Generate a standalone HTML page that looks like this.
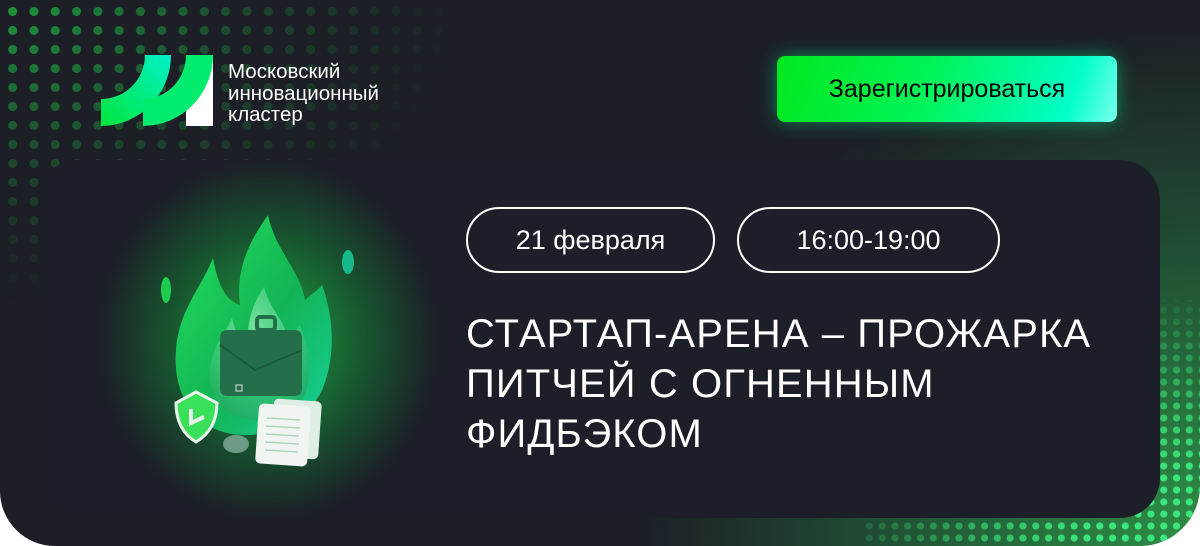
<!DOCTYPE html>
<html><head><meta charset="utf-8"><style>
*{margin:0;padding:0;box-sizing:border-box}
body{width:1200px;height:546px;background:#fff;overflow:hidden;font-family:"Liberation Sans","DejaVu Sans",sans-serif}
.banner{position:absolute;left:0;top:0;width:1200px;height:546px;border-radius:0 0 60px 55px;overflow:hidden;
background:radial-gradient(ellipse 560px 520px at 1200px 546px,#2f8f45 0%,#26703c 30%,#1f4a32 60%,rgba(28,31,38,0) 100%),#1c1f26}
.dots1{position:absolute;left:0;top:0;width:460px;height:546px;
background-image:radial-gradient(circle,#1f8f3c 4.2px,transparent 4.8px);background-size:21.3px 19px;background-position:2px 2px;
-webkit-mask-image:radial-gradient(ellipse 460px 300px at 0 0,#000 5%,rgba(0,0,0,.35) 55%,transparent 100%)}
.dots2{position:absolute;left:860px;top:300px;width:340px;height:246px;
background-image:radial-gradient(circle,#3be57f 3.3px,transparent 3.8px);background-size:12.8px 12px;background-position:3px 4px;
-webkit-mask-image:radial-gradient(ellipse 380px 260px at 100% 100%,#000 30%,transparent 100%)}
.card{position:absolute;left:38px;top:160px;width:1122px;height:358px;border-radius:40px;background:#1c1f27;overflow:hidden}
.glow{position:absolute;left:60px;top:0px;width:340px;height:360px;border-radius:50%;
background:radial-gradient(closest-side,#22963f 0%,#1b7a37 30%,#17522e 60%,rgba(28,31,39,0) 100%)}
.btn{position:absolute;left:777px;top:56px;width:340px;height:66px;border-radius:8px;
background:linear-gradient(110deg,#00e81c 0%,#00f45a 45%,#00ffc8 85%,#7affee 100%);box-shadow:0 0 18px rgba(0,255,150,.45);
color:#000;font-size:25px;text-align:center;line-height:66px}
.logo-t{position:absolute;left:228px;top:61px;color:#fff;font-size:20.5px;line-height:21.5px}
.pill{position:absolute;top:207px;height:66px;border:2px solid #fff;border-radius:33px;color:#fff;font-size:27px;line-height:62px;text-align:center}
.title{position:absolute;left:466px;top:309px;color:#fff;font-size:40px;line-height:50px;letter-spacing:1.1px}
</style></head><body>
<div class="banner">
<div class="dots1"></div>
<div class="dots2"></div>
<svg style="position:absolute;left:100px;top:55px" width="114" height="72" viewBox="100 55 114 72">
<defs><linearGradient id="g1" x1="0" y1="1" x2="1" y2="0"><stop offset="0" stop-color="#00e63c"/><stop offset="1" stop-color="#00f0c8"/></linearGradient></defs>
<rect x="186" y="55" width="27" height="71" fill="#fff"/>
<path d="M101 99 A44 44 0 0 0 145 55 L171 55 A70 71 0 0 1 101 126 Z" fill="url(#g1)"/>
<path d="M143 99 A43 44 0 0 0 186 55 L213 55 A70 71 0 0 1 143 126 Z" fill="#00ec6e"/>
</svg>
<div class="logo-t">Московский<br>инновационный<br>кластер</div>
<div class="btn">Зарегистрироваться</div>
<div class="card"><div class="glow"></div></div>
<svg style="position:absolute;left:0;top:0" width="460" height="546" viewBox="0 0 460 546">
<defs>
<linearGradient id="f1" x1="0" y1="0" x2="1" y2="1"><stop offset="0" stop-color="#22e05a"/><stop offset=".55" stop-color="#13b455"/><stop offset="1" stop-color="#16d09a"/></linearGradient>
<radialGradient id="f2" cx=".45" cy=".3" r=".8"><stop offset="0" stop-color="#a6f5c4"/><stop offset=".5" stop-color="#4ccf84"/><stop offset="1" stop-color="#1d9a5a"/></radialGradient>
</defs>
<path d="M245 435 C200 435 172 400 176 350 C179 310 200 290 213 258 C218 285 225 300 240 305 C235 270 250 240 268 215 C275 250 300 270 305 300 C310 295 318 290 322 285 C335 320 335 360 322 390 C308 420 280 435 245 435 Z" fill="url(#f1)"/>
<path d="M258 420 C225 420 208 400 210 370 C212 345 225 335 232 318 C236 335 240 340 248 345 C246 320 255 300 264 287 C270 310 285 320 288 340 C292 333 297 330 300 325 C310 350 312 375 305 395 C295 412 280 420 258 420 Z" fill="url(#f2)" opacity=".65"/>
<rect x="220" y="330" width="82" height="66" rx="7" fill="#246f4a"/>
<path d="M220 345 L255 370 L302 350" fill="none" stroke="#1a5a3a" stroke-width="2"/>
<rect x="257" y="317" width="18" height="13" rx="3" fill="none" stroke="#246f4a" stroke-width="4"/>
<rect x="236" y="385" width="6" height="6" fill="none" stroke="#ccc" stroke-width="1.2"/>
<path d="M176 403 L196 392 L217 403 C217 425 206 436 196 442 C186 436 176 425 176 403 Z" fill="#39e05a" stroke="#e8f5ec" stroke-width="3"/>
<path d="M191 409 L191 423 L204 417" fill="none" stroke="#e8f5ec" stroke-width="4"/>
<ellipse cx="236" cy="444" rx="13" ry="9" fill="#6d9a84"/>
<rect x="272" y="400" width="48" height="58" rx="5" fill="#dfeee5" transform="rotate(4 296 429)"/>
<rect x="257" y="405" width="52" height="60" rx="5" fill="#f0f5f2" transform="rotate(4 283 435)"/>
<g stroke="#9fd4b2" stroke-width="1.2"><line x1="267" y1="418" x2="300" y2="420"/><line x1="266" y1="426" x2="300" y2="428"/><line x1="266" y1="434" x2="299" y2="436"/><line x1="265" y1="442" x2="299" y2="444"/><line x1="265" y1="450" x2="298" y2="452"/></g>
<ellipse cx="166" cy="290" rx="5" ry="13" fill="#1ecc50"/>
<ellipse cx="348" cy="262" rx="6" ry="12" fill="#17b88a"/>
</svg>
<div class="pill" style="left:466px;width:249px">21 февраля</div>
<div class="pill" style="left:737px;width:263px">16:00-19:00</div>
<div class="title">СТАРТАП-АРЕНА – ПРОЖАРКА<br>ПИТЧЕЙ С ОГНЕННЫМ<br>ФИДБЭКОМ</div>
</div>
</body></html>
